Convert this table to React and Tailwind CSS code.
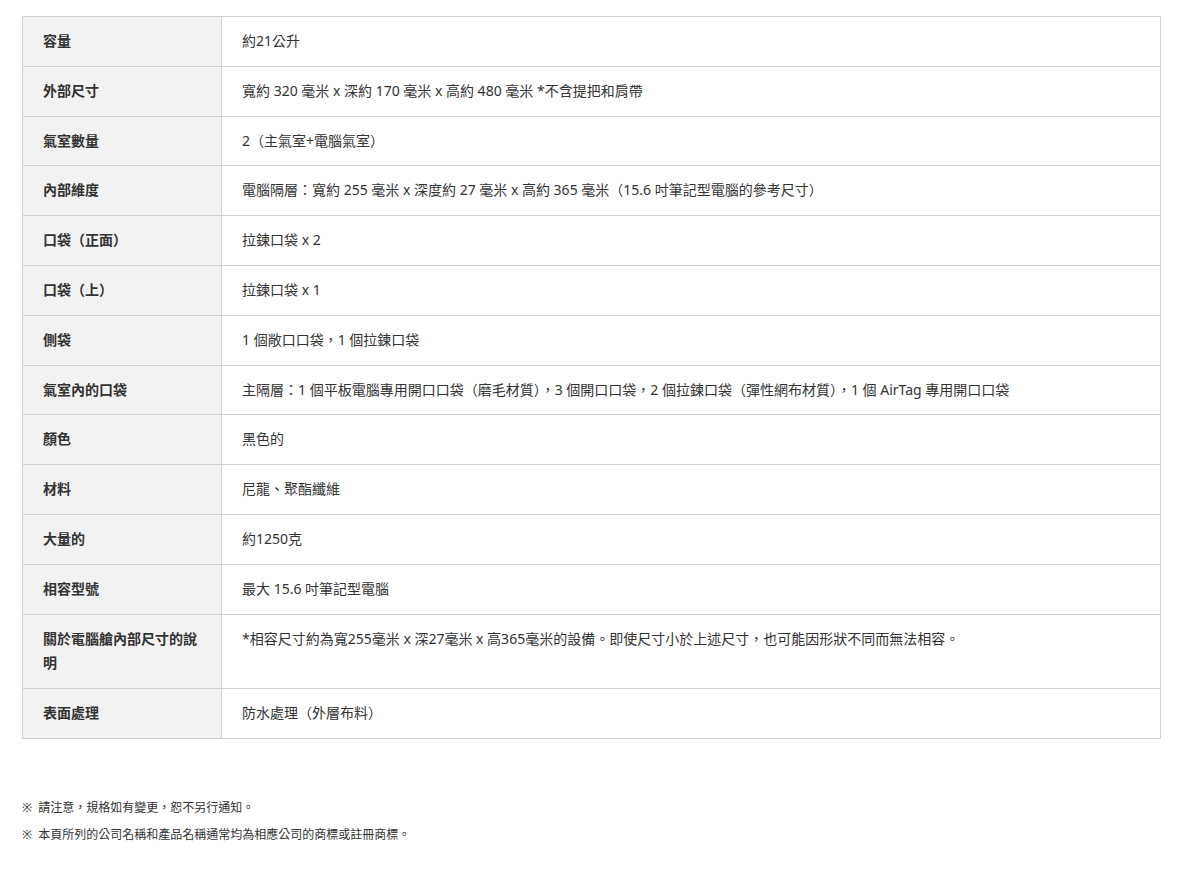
import React from 'react';

const specs = [
  ['容量', '約21公升'],
  ['外部尺寸', '寬約 320 毫米 x 深約 170 毫米 x 高約 480 毫米 *不含提把和肩帶'],
  ['氣室數量', '2（主氣室+電腦氣室）'],
  ['內部維度', '電腦隔層：寬約 255 毫米 x 深度約 27 毫米 x 高約 365 毫米（15.6 吋筆記型電腦的參考尺寸）'],
  ['口袋（正面）', '拉鍊口袋 x 2'],
  ['口袋（上）', '拉鍊口袋 x 1'],
  ['側袋', '1 個敞口口袋，1 個拉鍊口袋'],
  ['氣室內的口袋', '主隔層：1 個平板電腦專用開口口袋（磨毛材質），3 個開口口袋，2 個拉鍊口袋（彈性網布材質），1 個 AirTag 專用開口口袋'],
  ['顏色', '黑色的'],
  ['材料', '尼龍、聚酯纖維'],
  ['大量的', '約1250克'],
  ['相容型號', '最大 15.6 吋筆記型電腦'],
  ['關於電腦艙內部尺寸的說明', '*相容尺寸約為寬255毫米 x 深27毫米 x 高365毫米的設備。即使尺寸小於上述尺寸，也可能因形狀不同而無法相容。'],
  ['表面處理', '防水處理（外層布料）'],
];

const App = () => {
  return (
    <div className="bg-white w-[1185px] min-h-[876px] pt-4 px-[22px] text-[#333] font-['Noto_Sans','Noto_Sans_CJK_TC',sans-serif]">
      {/* spec table */}
      <table className="w-[1139px] border-collapse text-[14px] leading-[24.8px]">
        <tbody>
          {specs.map(([label, value]) => (
            <tr key={label}>
              <th className="w-[199px] bg-[#f2f2f2] border border-[#d2d2d2] px-5 py-3 text-left align-top font-bold">{label}</th>
              <td className="border border-[#d2d2d2] px-5 py-3 align-top">{value}</td>
            </tr>
          ))}
        </tbody>
      </table>

      {/* notes */}
      <div className="mt-[55px] text-[12px] leading-[27px]">
        <p>※&nbsp; 請注意，規格如有變更，恕不另行通知。</p>
        <p>※&nbsp; 本頁所列的公司名稱和產品名稱通常均為相應公司的商標或註冊商標。</p>
      </div>
    </div>
  );
};

export default App;
